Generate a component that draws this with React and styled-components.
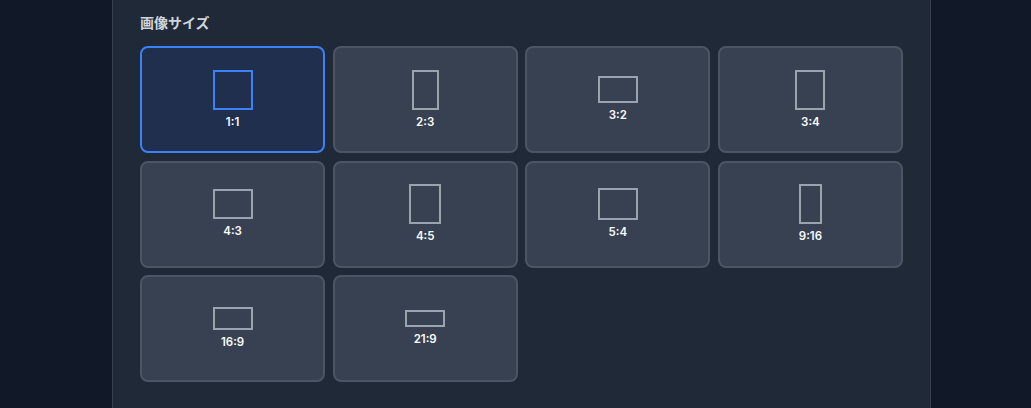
import React, { useState } from "react";
import styled, { createGlobalStyle } from "styled-components";

const GlobalStyle = createGlobalStyle`
  html, body {
    margin: 0;
    padding: 0;
    background: #111827;
    font-family: "Inter", "Noto Sans CJK JP", sans-serif;
  }
`;

const sizes = [
  { label: "1:1", w: 1, h: 1 },
  { label: "2:3", w: 2, h: 3 },
  { label: "3:2", w: 3, h: 2 },
  { label: "3:4", w: 3, h: 4 },
  { label: "4:3", w: 4, h: 3 },
  { label: "4:5", w: 4, h: 5 },
  { label: "5:4", w: 5, h: 4 },
  { label: "9:16", w: 9, h: 16 },
  { label: "16:9", w: 16, h: 9 },
  { label: "21:9", w: 21, h: 9 },
];

const App = () => {
  const [selected, setSelected] = useState("1:1");
  return (
    <Page>
      <GlobalStyle />
      <Panel>
        <Title>画像サイズ</Title>
        <Grid>
          {sizes.map((s) => {
            const max = Math.max(s.w, s.h);
            const active = selected === s.label;
            return (
              <Card key={s.label} $active={active} onClick={() => setSelected(s.label)}>
                <Shape
                  $active={active}
                  style={{ width: (40 * s.w) / max, height: (40 * s.h) / max }}
                />
                <Label>{s.label}</Label>
              </Card>
            );
          })}
        </Grid>
      </Panel>
    </Page>
  );
};

export default App;

const Page = styled.div`
  min-height: 408px;
  display: flex;
  padding-left: 112px;
`;

const Panel = styled.section`
  width: 819px;
  box-sizing: border-box;
  min-height: 408px;
  background: #1f2937;
  border-left: 1px solid #374151;
  border-right: 1px solid #374151;
  padding: 13px 27px 0 27px;
`;

const Title = styled.h3`
  margin: 0 0 13px;
  font-size: 14px;
  line-height: 20px;
  font-weight: 700;
  color: #d1d5db;
`;

const Grid = styled.div`
  display: grid;
  grid-template-columns: repeat(4, 1fr);
  gap: 7.5px;
`;

const Card = styled.button`
  height: 107px;
  box-sizing: border-box;
  display: flex;
  flex-direction: column;
  align-items: center;
  justify-content: center;
  gap: 4px;
  padding: 0;
  border-radius: 8px;
  cursor: pointer;
  border: 2px solid ${(p) => (p.$active ? "#3b82f6" : "#4b5563")};
  background: ${(p) => (p.$active ? "#1f2f4d" : "#374151")};
  font-family: inherit;
`;

const Shape = styled.div`
  box-sizing: border-box;
  border: 2px solid ${(p) => (p.$active ? "#3b82f6" : "#9ca3af")};
`;

const Label = styled.span`
  font-size: 11.5px;
  line-height: 16px;
  font-weight: 600;
  color: #f9fafb;
`;
